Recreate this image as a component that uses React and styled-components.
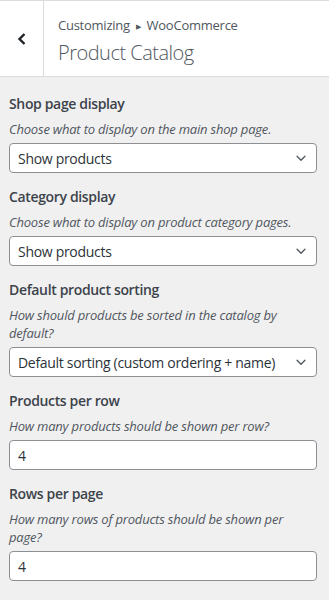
import React from "react";
import styled, { createGlobalStyle } from "styled-components";

const GlobalStyle = createGlobalStyle`
  body {
    margin: 0;
    background: #f0f0f1;
    font-family: "Open Sans", "Noto Sans", sans-serif;
    color: #3c434a;
  }
`;

const Panel = styled.div`
  width: 329px;
  min-height: 600px;
  background: #f0f0f1;
  border-top: 1px solid #dcdcde;
  box-sizing: border-box;
`;

const Header = styled.div`
  display: flex;
  height: 75px;
  background: #fff;
  border-bottom: 1px solid #dcdcde;
`;

const BackButton = styled.button`
  width: 44px;
  flex: none;
  display: flex;
  align-items: center;
  justify-content: center;
  padding: 0;
  background: #fff;
  border: none;
  border-right: 1px solid #dcdcde;
  color: #1d2327;
  cursor: pointer;
`;

const TitleBlock = styled.div`
  display: flex;
  flex-direction: column;
  padding: 14px 0 0 14px;
`;

const Crumb = styled.span`
  font-size: 13px;
  line-height: 20px;
  letter-spacing: -0.25px;
  color: #50575e;
`;

const Arrow = styled.span`
  font-size: 7px;
  margin: 0 6px;
  position: relative;
  top: -1px;
`;

const Title = styled.h1`
  margin: 2px 0 0;
  font-size: 20px;
  font-weight: 300;
  line-height: 26px;
  letter-spacing: -0.5px;
  color: #50575e;
`;

const Body = styled.div`
  display: flex;
  flex-direction: column;
  gap: 14px;
  padding: 17px 12px 0 9px;
`;

const Control = styled.div`
  display: flex;
  flex-direction: column;
`;

const Label = styled.span`
  font-size: 14px;
  font-weight: 600;
  line-height: 20px;
  letter-spacing: -0.35px;
  color: #3c434a;
`;

const Description = styled.span`
  margin-top: 6px;
  font-size: 13px;
  font-style: italic;
  line-height: 18px;
  letter-spacing: -0.2px;
  color: #50575e;
`;

const Field = styled.div`
  margin-top: 5px;
  height: 30px;
  box-sizing: border-box;
  display: flex;
  align-items: center;
  justify-content: space-between;
  padding: 0 8px 0 8px;
  background: #fff;
  border: 1px solid #8c8f94;
  border-radius: 4px;
  font-size: 14px;
  letter-spacing: -0.3px;
  color: #2c3338;
`;

const Chevron = () => (
  <svg width="14" height="14" viewBox="0 0 16 16" fill="none">
    <path d="M3.5 6l4.5 4.5L12.5 6" stroke="#50575e" strokeWidth="1.5" strokeLinecap="round" strokeLinejoin="round" />
  </svg>
);

const controls = [
  { label: "Shop page display", desc: "Choose what to display on the main shop page.", value: "Show products", select: true },
  { label: "Category display", desc: "Choose what to display on product category pages.", value: "Show products", select: true },
  { label: "Default product sorting", desc: "How should products be sorted in the catalog by default?", value: "Default sorting (custom ordering + name)", select: true },
  { label: "Products per row", desc: "How many products should be shown per row?", value: "4" },
  { label: "Rows per page", desc: "How many rows of products should be shown per page?", value: "4" },
];

export default function App() {
  return (
    <>
      <GlobalStyle />
      <Panel>
        <Header>
          <BackButton aria-label="Back">
            <svg width="12" height="14" viewBox="0 0 12 14" fill="none">
              <path d="M8.5 2L3.5 7l5 5" stroke="#1d2327" strokeWidth="2.4" />
            </svg>
          </BackButton>
          <TitleBlock>
            <Crumb>
              Customizing<Arrow>▶</Arrow>WooCommerce
            </Crumb>
            <Title>Product Catalog</Title>
          </TitleBlock>
        </Header>
        <Body>
          {controls.map((c) => (
            <Control key={c.label}>
              <Label>{c.label}</Label>
              <Description>{c.desc}</Description>
              <Field>
                <span>{c.value}</span>
                {c.select && <Chevron />}
              </Field>
            </Control>
          ))}
        </Body>
      </Panel>
    </>
  );
}
